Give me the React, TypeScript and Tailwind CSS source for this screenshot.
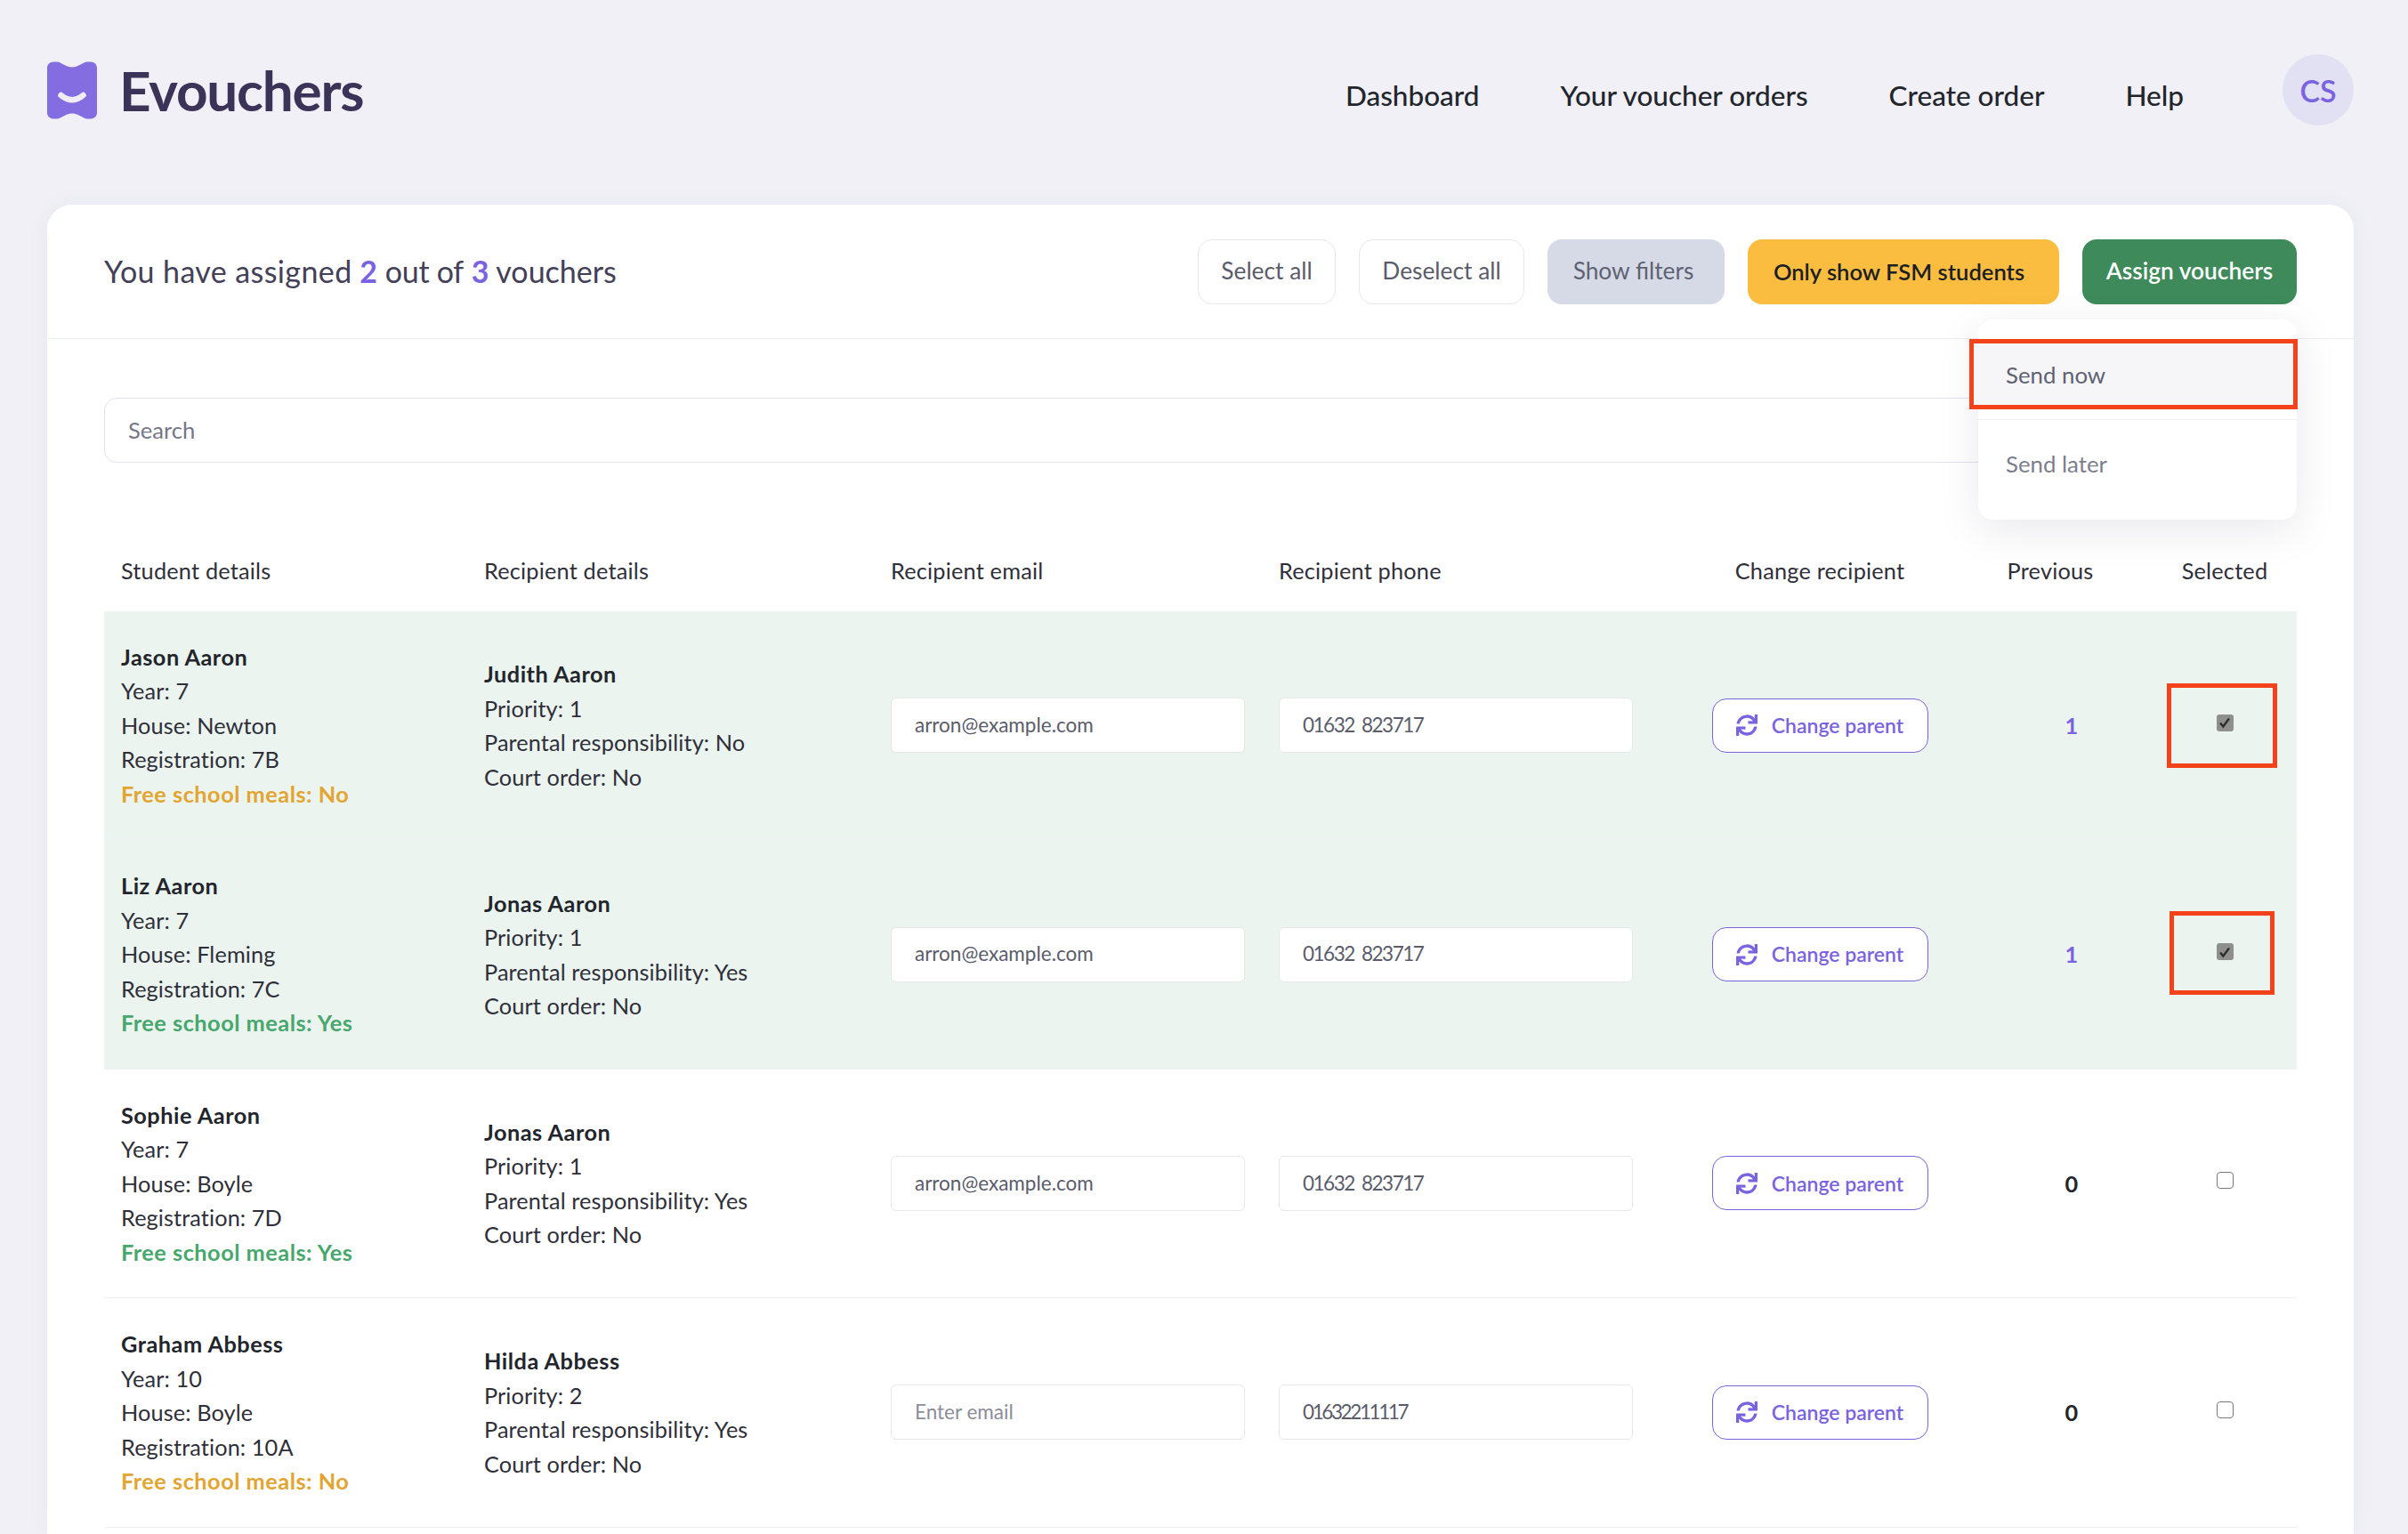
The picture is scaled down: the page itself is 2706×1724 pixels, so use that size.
import { FaSync } from 'react-icons/fa'

const font = "[font-family:Lato,'Liberation_Sans',sans-serif]"

interface Student {
  name: string
  year: string
  house: string
  reg: string
  fsm: boolean
  parent: string
  priority: string
  responsibility: string
  email: string
  phone: string
  previous: string
  selected: boolean
}

const STUDENTS: Student[] = [
  { name: 'Jason Aaron', year: '7', house: 'Newton', reg: '7B', fsm: false, parent: 'Judith Aaron', priority: '1', responsibility: 'No', email: 'arron@example.com', phone: '01632 823717', previous: '1', selected: true },
  { name: 'Liz Aaron', year: '7', house: 'Fleming', reg: '7C', fsm: true, parent: 'Jonas Aaron', priority: '1', responsibility: 'Yes', email: 'arron@example.com', phone: '01632 823717', previous: '1', selected: true },
  { name: 'Sophie Aaron', year: '7', house: 'Boyle', reg: '7D', fsm: true, parent: 'Jonas Aaron', priority: '1', responsibility: 'Yes', email: 'arron@example.com', phone: '01632 823717', previous: '0', selected: false },
  { name: 'Graham Abbess', year: '10', house: 'Boyle', reg: '10A', fsm: false, parent: 'Hilda Abbess', priority: '2', responsibility: 'Yes', email: '', phone: '01632211117', previous: '0', selected: false },
]

const cols = 'grid grid-cols-[408px_457px_436px_443px_330px_236px_108px_27px] pl-[19px]'

function Logo() {
  return (
    <svg width="56" height="65" viewBox="0 0 56 64" className="mt-[69px] shrink-0">
      <path
        d="M7 0H11C16 0 20 6 28 6S40 0 45 0H49C53 0 56 3 56 7V57C56 61 53 64 49 64H45C40 64 36 58 28 58S16 64 11 64H7C3 64 0 61 0 57V7C0 3 3 0 7 0Z"
        fill="#836de0"
      />
      <path d="M15.500 37.500Q28 48 40.500 37.500" fill="none" stroke="#f0eefa" strokeWidth="6.500" strokeLinecap="round" />
    </svg>
  )
}

function Row({ s, index }: { s: Student; index: number }) {
  return (
    <div className={`${cols} h-[257.400px] items-center border-b border-[#eef0f4] text-[25.300px] leading-[38.500px] tracking-[0.100px] text-[#2f2f3a] ${s.selected ? 'bg-[#ebf4ef]' : ''}`}>
      <div>
        <div className="font-bold tracking-[0.500px] text-[#22252c]">{s.name}</div>
        <div>Year: {s.year}</div>
        <div>House: {s.house}</div>
        <div>Registration: {s.reg}</div>
        <div className={`font-bold tracking-[0.500px] ${s.fsm ? 'text-[#47a76c]' : 'text-[#e3a532]'}`}>Free school meals: {s.fsm ? 'Yes' : 'No'}</div>
      </div>
      <div>
        <div className="font-bold tracking-[0.500px] text-[#22252c]">{s.parent}</div>
        <div>Priority: {s.priority}</div>
        <div>Parental responsibility: {s.responsibility}</div>
        <div>Court order: No</div>
      </div>
      <div className="flex h-[62px] w-[398px] items-center rounded-[6px] border border-[#e6e8ee] bg-white pl-[26px] text-[22.500px] tracking-normal text-[#5a5c6b]">
        {s.email || <span className="text-[#8b8d9a]">Enter email</span>}
      </div>
      <div className={`flex h-[62px] w-[398px] items-center rounded-[6px] border border-[#e6e8ee] bg-white pl-[26px] text-[22.500px] [word-spacing:4px] text-[#5a5c6b] ${s.phone.includes(' ') ? 'tracking-[-1.500px]' : 'tracking-[-2.400px]'}`}>
        {s.phone}
      </div>
      <div className="flex justify-center">
        <div className="flex h-[61px] w-[243px] items-center justify-center gap-[16px] rounded-[16px] border-[1.500px] border-[#7a63e0] bg-white text-[23px] font-semibold tracking-normal text-[#7a63e0]">
          <FaSync size={24} />
          Change parent
        </div>
      </div>
      <div className={`text-center font-bold ${s.previous === '1' ? 'text-[#7a63e0]' : 'text-[#22252c]'}`}>{s.previous}</div>
      <div className="relative flex justify-center">
        {s.selected ? (
          <div className="-mt-[6px] flex h-[19px] w-[19px] items-center justify-center rounded-[3px] bg-[#8f8f8f]">
            <svg width="14" height="14" viewBox="0 0 14 14">
              <path d="M2 7.500l3.300 4L12 2.500" fill="none" stroke="#2e2e2e" strokeWidth="2.400" />
            </svg>
          </div>
        ) : (
          <div className="-mt-[6px] h-[19px] w-[19px] rounded-[4px] border-[1.500px] border-[#77777c] bg-white" />
        )}
        {index === 0 && <div className="absolute left-[-11px] top-[-41px] h-[95px] w-[124px] border-[5px] border-[#f4421a]" />}
        {index === 1 && <div className="absolute left-[-8px] top-[-42px] h-[94px] w-[118px] border-[5px] border-[#f4421a]" />}
      </div>
    </div>
  )
}

export default function App() {
  return (
    <div className={`${font} h-[1724px] overflow-hidden bg-[#f0f0f6]`}>
      <header className="flex h-[230px] items-start pl-[53px] pr-[61px]">
        <Logo />
        <div className="ml-[25px] mt-[59px] text-[62px] font-bold leading-[84px] tracking-[-1.200px] text-[#3b3358]">Evouchers</div>
        <nav className="ml-auto mt-[88px] flex gap-[91px] text-[31.500px] font-medium leading-[38px] text-[#22252c]">
          <span>Dashboard</span>
          <span>Your voucher orders</span>
          <span>Create order</span>
          <span>Help</span>
        </nav>
        <div className="ml-[111px] mt-[61px] flex h-[80px] w-[80px] items-center justify-center rounded-full bg-[#e2e0f3] text-[34px] font-semibold text-[#7a63e0]">CS</div>
      </header>

      <main className="relative ml-[53px] mr-[61px] h-[1494px] rounded-t-[28px] bg-white shadow-[0_0_30px_rgba(60,60,110,0.04)]">
        <div className="flex h-[151px] items-center gap-[26px] border-b border-[#eceef2] px-[64px]">
          <div className="mr-auto -mt-[2px] text-[34px] text-[#434058]">
            <span className="tracking-[0.400px]">You have assigned</span> <span className="font-bold text-[#7a63e0]">2</span> <span className="tracking-[-0.300px]">out of</span> <span className="font-bold text-[#7a63e0]">3</span> vouchers
          </div>
          <button className="h-[73px] w-[155px] rounded-[16px] border border-[#e6e8ee] text-[26.300px] text-[#5a5c6b]">Select all</button>
          <button className="h-[73px] w-[186px] rounded-[16px] border border-[#e6e8ee] text-[26.300px] text-[#5a5c6b]">Deselect all</button>
          <button className="h-[73px] w-[199px] rounded-[16px] bg-[#d5dae6] pr-[6px] text-[26.300px] text-[#5f6272]">Show filters</button>
          <button className="h-[73px] w-[350px] rounded-[16px] bg-[#fbbd3f] pr-[10px] text-[25.600px] font-semibold text-[#1d1d24]">Only show FSM students</button>
          <button className="h-[73px] w-[241px] rounded-[16px] bg-[#3e8a5a] text-[26.300px] font-semibold text-white">Assign vouchers</button>
        </div>

        <div className="px-[64px]">
          <div className="mt-[66px] flex h-[73px] items-center rounded-[14px] border border-[#e2e2ee] pl-[26px] text-[25.600px] text-[#757786]">Search</div>
          <div className={`${cols} mt-[77px] h-[90px] items-center text-[25.300px] tracking-[0.200px] text-[#2f2f3a]`}>
            <div>Student details</div>
            <div>Recipient details</div>
            <div>Recipient email</div>
            <div>Recipient phone</div>
            <div className="text-center">Change recipient</div>
            <div className="pr-[48px] text-center">Previous</div>
            <div className="whitespace-nowrap text-center">Selected</div>
          </div>
          {STUDENTS.map((s, i) => <Row key={s.name} s={s} index={i} />)}
        </div>

        <div className="absolute right-[64px] top-[129px] w-[358px] rounded-[16px] bg-white py-[13px] text-[25.800px] shadow-[0_12px_48px_rgba(40,40,80,0.10)]">
          <div className="relative flex h-[100px] items-center border-b border-[#f0f0f3] pl-[31px] text-[#5f6272]">
            <div className="absolute -left-[10px] -right-px top-[9px] h-[79px] border-[5px] border-[#f4421a] bg-[#f6f6f9]" />
            <span className="relative">Send now</span>
          </div>
          <div className="-mt-[1px] flex h-[100px] items-center pl-[31px] text-[#7c7e8e]">Send later</div>
        </div>
      </main>
    </div>
  )
}
